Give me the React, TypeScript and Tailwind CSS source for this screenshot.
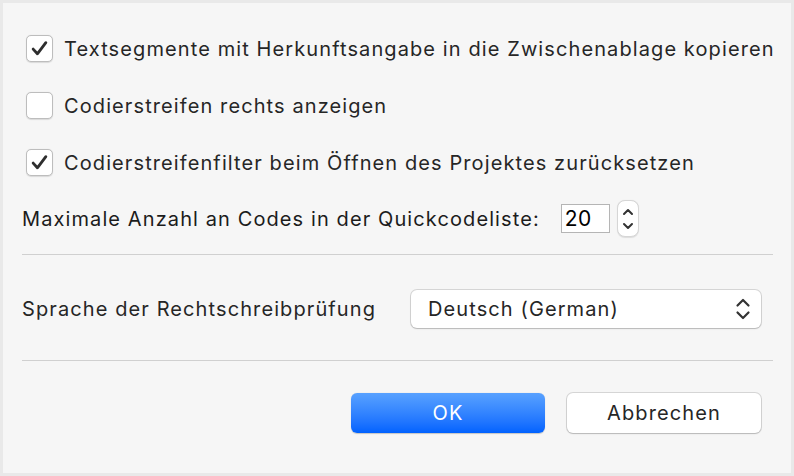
function Check({ checked }: { checked: boolean }) {
  return (
    <div className="w-[27px] h-[27px] shrink-0 rounded-[5px] bg-white border border-[#bdbdbd] shadow-[0_0.5px_1px_rgba(0,0,0,0.12)] flex items-center justify-center">
      {checked && (
        <svg width="19" height="19" viewBox="0 0 18 18">
          <path d="M3 9.6 L7 14 L15 3.5" fill="none" stroke="#2e2e2e" strokeWidth="2.7" strokeLinecap="round" strokeLinejoin="round" />
        </svg>
      )}
    </div>
  );
}

function CheckRow({ checked, label, h = "h-[57px]" }: { checked: boolean; label: string; h?: string }) {
  return (
    <div className={`${h} flex items-center gap-[11px] pl-[23px]`}>
      <Check checked={checked} />
      <span className="whitespace-nowrap">{label}</span>
    </div>
  );
}

export default function App() {
  return (
    <div
      className="w-[794px] h-[476px] bg-[#f6f6f6] border-[3px] border-[#e9e9e9] text-[20px] tracking-[1.1px] text-[#262626] pt-[17px]"
      style={{ fontFamily: "Inter, 'Liberation Sans', sans-serif" }}
    >
      <CheckRow checked label="Textsegmente mit Herkunftsangabe in die Zwischenablage kopieren" />
      <CheckRow checked={false} label="Codierstreifen rechts anzeigen" />
      <CheckRow checked label="Codierstreifenfilter beim Öffnen des Projektes zurücksetzen" />
      <div className="h-[55px] flex items-center pl-[19px]">
        <span className="whitespace-nowrap text-[#1c1c1c]">Maximale Anzahl an Codes in der Quickcodeliste:</span>
        <div className="ml-[21px] w-[49px] h-[29px] bg-white border border-[#b5b5b5] flex items-center pl-[3px] text-black text-[21px] tracking-[0.5px]">
          20
        </div>
        <div className="ml-[7px] w-[22px] h-[37px] rounded-[8px] bg-white border border-[#d6d6d6] shadow-[0_0.5px_1px_rgba(0,0,0,0.1)] flex flex-col items-center justify-center gap-[6px]">
          <svg width="12" height="8" viewBox="0 0 12 8">
            <path d="M2 6 L6 2 L10 6" fill="none" stroke="#333" strokeWidth="2" strokeLinecap="round" strokeLinejoin="round" />
          </svg>
          <svg width="12" height="8" viewBox="0 0 12 8">
            <path d="M2 2 L6 6 L10 2" fill="none" stroke="#333" strokeWidth="2" strokeLinecap="round" strokeLinejoin="round" />
          </svg>
        </div>
      </div>
      <div className="mt-[8px] ml-[19px] w-[751px] h-px bg-[#d0d0d0]" />
      <div className="mt-[35px] h-[38px] flex items-center pl-[19px]">
        <span className="whitespace-nowrap w-[389px]">Sprache der Rechtschreibprüfung</span>
        <div className="w-[350px] h-[38px] bg-white rounded-[6px] shadow-[0_0_0_1px_rgba(0,0,0,0.13),0_1px_1.5px_rgba(0,0,0,0.15)] flex items-center justify-between pl-[17px] pr-[9px]">
          <span className="whitespace-nowrap">Deutsch (German)</span>
          <svg width="18" height="26" viewBox="0 0 18 26">
            <path d="M3.5 9.5 L9 4 L14.5 9.5" fill="none" stroke="#333" strokeWidth="2.2" strokeLinecap="round" strokeLinejoin="round" />
            <path d="M3.5 16.5 L9 22 L14.5 16.5" fill="none" stroke="#333" strokeWidth="2.2" strokeLinecap="round" strokeLinejoin="round" />
          </svg>
        </div>
      </div>
      <div className="mt-[32px] ml-[19px] w-[751px] h-px bg-[#d0d0d0]" />
      <div className="mt-[32px] flex pl-[348px] gap-[22px]">
        <button className="w-[194px] h-[40px] rounded-[6px] bg-gradient-to-b from-[#58a1ff] to-[#0062ff] text-white flex items-center justify-center shadow-[0_0.5px_1px_rgba(0,0,0,0.2)]">
          OK
        </button>
        <button className="w-[194px] h-[40px] rounded-[6px] bg-white text-[#262626] flex items-center justify-center shadow-[0_0_0_1px_rgba(0,0,0,0.13),0_1px_1.5px_rgba(0,0,0,0.15)]">
          Abbrechen
        </button>
      </div>
    </div>
  );
}
